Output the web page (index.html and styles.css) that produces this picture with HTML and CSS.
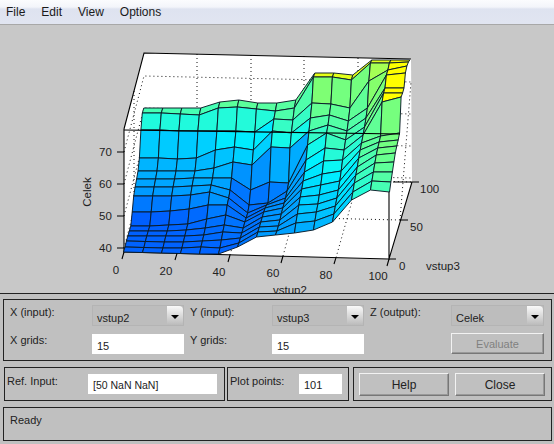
FILE: index.html
```html
<!DOCTYPE html>
<html>
<head>
<meta charset="utf-8">
<title>Surface Viewer</title>
<link rel="stylesheet" href="styles.css">
</head>
<body>
<nav class="menu"><span>File</span><span>Edit</span><span>View</span><span>Options</span></nav>
<section class="plot">
<svg class="chart" viewBox="0 25 554 268" width="554" height="268">
  <polygon class="wall" points="124,129 144,53 411,59 412,182 389,259 124,252"/>
  <g class="grid">
    <path d="M124,152L144,76L411,82M124,184L144,108L411,114M124,216L144,140L411,146M124,248L144,172L411,178"/>
    <path d="M134,91L134,214M197,54L197,177M251,55L251,178M304,56L304,179M358,58L358,180"/>
    <path d="M177,253.500L197,177M230,255L251,178M283,256L304,179M336,257.600L358,180"/>
    <path d="M135,214L400,220M146,175L412,182"/>
    <path d="M400,220L411,82"/>
  </g>
  <path class="axis" d="M124,129L144,53L411,59M124,129L124,252L389,259L412,182M389,259L389,192M393,182L412,182"/>
  <g id="surface"></g>
  <path class="axis" d="M124,130L400,134M117,152H124M117,184H124M117,216H124M117,248H124M124,252L122,259M177,253.500L175,260M230,255L228,262M283,256L281,263M336,257.600L334,264M389,259L387,266M389,259H396M400,220H408M412,182H419"/>
  <g class="labels">
    <text x="99" y="156">70</text><text x="99" y="188">60</text><text x="99" y="220">50</text><text x="99" y="252">40</text>
    <text class="mid" x="116" y="274">0</text><text class="mid" x="166" y="275">20</text><text class="mid" x="219" y="276">40</text><text class="mid" x="273" y="277">60</text><text class="mid" x="326" y="279">80</text><text class="mid" x="378" y="280">100</text>
    <text x="399" y="270">0</text><text x="410" y="231">50</text><text x="420" y="193">100</text>
    <text x="426" y="270">vstup3</text><text x="273" y="294">vstup2</text>
    <text class="mid" transform="translate(91,192) rotate(-90)">Celek</text>
  </g>
</svg>
</section>
<section class="panel axes">
  <label>X (input):</label>
  <div class="popup"><span>vstup2</span><i></i></div>
  <label>Y (input):</label>
  <div class="popup"><span>vstup3</span><i></i></div>
  <label>Z (output):</label>
  <div class="popup"><span>Celek</span><i></i></div>
  <label>X grids:</label>
  <div class="field">15</div>
  <label>Y grids:</label>
  <div class="field">15</div>
  <span></span>
  <div class="button disabled">Evaluate</div>
</section>
<div class="row">
  <section class="panel ref"><label>Ref. Input:</label><div class="field">[50 NaN NaN]</div></section>
  <section class="panel points"><label>Plot points:</label><div class="field">101</div></section>
  <section class="panel actions"><div class="button">Help</div><div class="button">Close</div></section>
</div>
<section class="panel status">Ready</section>
<script src="plot.js"></script>
</body>
</html>
```
FILE: styles.css
```css
* { box-sizing: border-box; }
html, body { margin: 0; height: 100%; }
body {
  width: 554px; height: 444px; overflow: hidden;
  background: #c0c0c0; color: #222;
  font: 11px/14px "Liberation Sans", Arial, sans-serif;
}
.menu {
  height: 25px; display: flex; gap: 16px; align-items: center; padding: 0 6px 1px;
  background: linear-gradient(#fbfcfe 0, #f3f5fa 7px, #dee3f0 9px, #e1e5f1 23px);
  border-bottom: 1px solid #a8a8a8;
  font: 12px "Liberation Sans", Arial, sans-serif; color: #1a1a1a;
}
.plot { height: 269px; background: #c8c8c8; border-bottom: 1px solid #222; }
.chart { display: block; }
.wall { fill: #fff; }
.grid path { fill: none; stroke: #111; stroke-width: 1; stroke-dasharray: 1 3; }
.axis { fill: none; stroke: #000; stroke-width: 1.1; }
.labels text { font: 11.5px "Liberation Sans", Arial, sans-serif; fill: #222; }
.labels .mid { text-anchor: middle; }
.face { stroke: #0a1a28; stroke-width: 0.95; stroke-linejoin: round; }
.panel { border: 1px solid #222; background: #c0c0c0; }
.axes {
  margin: 5px 2px 0 3px; height: 62px; padding: 5px 0 0 6px;
  display: grid; column-gap: 6px; row-gap: 7px;
  grid-template-columns: 76px 92px 76px 92px 75px 93px;
  grid-template-rows: 21px 21px;
}
.field {
  height: 20px; align-self: end; background: #fff; padding: 5px 0 0 5px; color: #222;
}
.popup {
  display: flex; background: #bdbdbd; border: 1px solid #b4b4b4;
}
.popup span { flex: 1; padding: 5px 0 0 4px; }
.popup i {
  width: 16px; position: relative; background: linear-gradient(#fafafa, #bbb);
  border-radius: 0 4px 4px 0;
}
.popup i::after {
  content: ""; position: absolute; left: 4px; top: 9px;
  border: 4px solid transparent; border-top-color: #000; border-bottom: 0;
}
.button {
  display: flex; align-items: center; justify-content: center; background: #c0c0c0;
  border: 1px solid #777; border-top-color: #f2f2f2; border-left-color: #f2f2f2;
  box-shadow: inset -1px -1px 0 #999;
}
.disabled { color: #808080; }
.row { display: flex; margin: 6px 2px 0 4px; height: 34px; }
.ref { width: 221px; display: flex; padding: 6px 7px 0 2px; }
.ref label { width: 81px; }
.ref .field { flex: 1; height: 20px; align-self: flex-start; font-size: 10.5px; padding-top: 4px; }
.points { width: 122px; margin-left: 2px; display: flex; padding: 6px 6px 0 2px; }
.points label { width: 69px; }
.points .field { flex: 1; align-self: flex-start; padding-top: 4px; }
.actions { flex: 1; margin-left: 4px; display: flex; gap: 6px; padding: 5px 6px 4px 5px; }
.actions .button { flex: 1; font-size: 12px; }
.status { margin: 6px 2px 0 3px; height: 34px; padding: 5px 6px; }
```
FILE: plot.js
```js
/* Screen y of every mesh vertex: one line per x grid column, y grid row 0 to 14. */
var columns = [
  [252, 247, 241, 236, 231, 226, 212, 196, 187, 179, 171, 158, 130, 113, 108],
  [252.5, 247.5, 241.5, 236, 231, 226, 212, 196, 187, 179, 171, 158, 130, 113, 108],
  [253, 248, 242, 236, 231, 225, 211, 196, 187, 179, 171, 159, 131, 114, 108],
  [253.5, 248, 242, 236, 230, 224, 209, 195, 186, 178, 171, 158, 131, 115, 108],
  [254, 247, 241, 235, 228, 219, 205, 192, 185, 178, 168, 150, 131, 108, 102],
  [254, 248, 240, 232, 225, 215, 205, 198, 190, 178, 162, 147, 131, 107, 100],
  [247, 243, 238, 233, 228, 222, 218, 213, 205, 190, 165, 150, 132, 109, 103],
  [237, 232, 227, 222, 217, 212, 208, 205, 203, 182, 147, 131, 119, 111, 103],
  [235, 231, 226, 220, 214, 208, 203, 198, 191, 183, 148, 133, 120, 108, 100],
  [233, 223, 214, 205, 197, 189, 181, 172, 160, 145, 131, 118, 103, 77, 73],
  [230, 221, 212, 204, 195, 185, 174, 161, 148, 133, 125, 115, 104, 77, 73],
  [222, 214, 206, 198, 190, 181, 171, 160, 150, 140, 131, 121, 108, 80, 75],
  [200, 192, 183, 175, 167, 158, 150, 143, 135, 127, 118, 108, 81, 63, 60],
  [190, 181, 172, 163, 155, 148, 142, 136, 102, 93, 88, 75, 70, 63, 60],
  [192, 182, 172, 162, 153, 146, 140, 133, 97, 93, 88, 73, 66, 62, 60]
];
var stops = [
  [0, 0, 90, 255], [50, 0, 245, 255], [70, 70, 255, 180],
  [95, 140, 255, 100], [105, 210, 255, 40], [115, 255, 255, 0]
];
var overrides = { "12,12": "rgb(165,255,85)", "12,13": "rgb(225,255,30)" };

function screenX(i, j) { return 123.5 + 19 * i + 1.45 * j; }
function floorY(i, j) { return 252 + 0.5 * i - 5.5 * j; }
function height(i, j) { return floorY(i, j) - columns[i][j]; }
function point(i, j) { return screenX(i, j).toFixed(1) + "," + columns[i][j]; }

function colour(h) {
  for (var k = 1; k < stops.length; k++) {
    if (h <= stops[k][0]) {
      var a = stops[k - 1], b = stops[k], t = Math.max(0, (h - a[0]) / (b[0] - a[0]));
      return "rgb(" + [1, 2, 3].map(function (c) {
        return Math.round(a[c] + (b[c] - a[c]) * t);
      }).join(",") + ")";
    }
  }
  return "rgb(255,255,0)";
}

var group = document.getElementById("surface");
for (var j = 13; j >= 0; j--) {
  for (var i = 0; i < 14; i++) {
    var face = document.createElementNS("http://www.w3.org/2000/svg", "polygon");
    face.setAttribute("class", "face");
    face.setAttribute("points", [point(i, j), point(i + 1, j), point(i + 1, j + 1), point(i, j + 1)].join(" "));
    var low = Math.min(height(i, j), height(i + 1, j), height(i + 1, j + 1), height(i, j + 1));
    face.setAttribute("fill", overrides[i + "," + j] || colour(low + 3));
    group.appendChild(face);
  }
}
```
